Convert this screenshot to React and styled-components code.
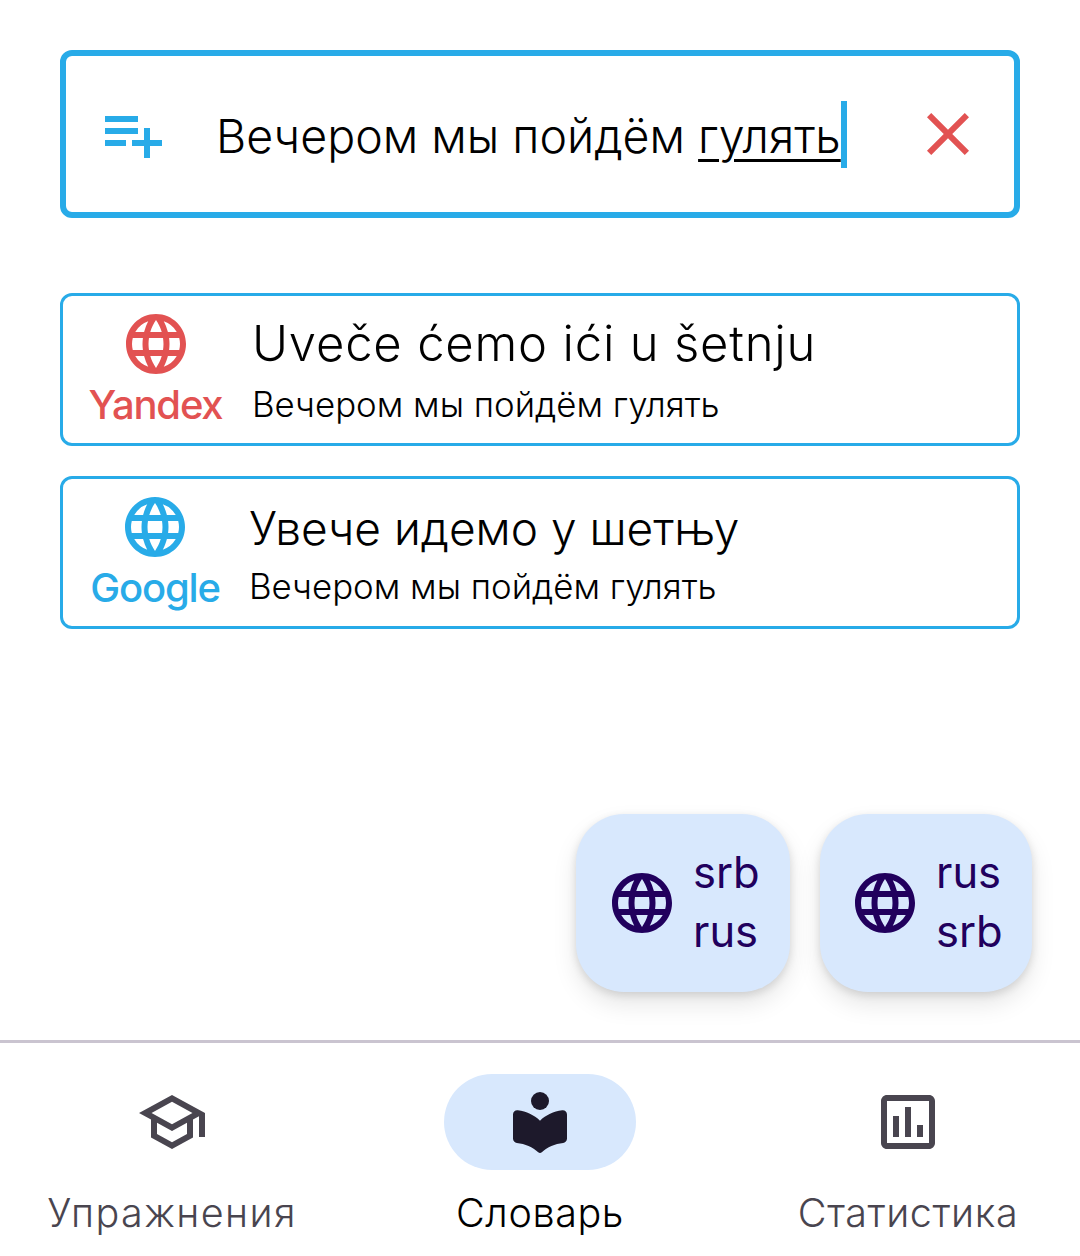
import React from 'react';
import styled, { createGlobalStyle } from 'styled-components';
import {
  MdPlaylistAdd,
  MdClose,
  MdLanguage,
  MdOutlineSchool,
  MdOutlinePoll,
} from 'react-icons/md';

const GlobalStyle = createGlobalStyle`
  html, body {
    margin: 0;
    padding: 0;
    background: #fff;
  }
`;

const Screen = styled.div`
  width: 1080px;
  height: 1256px;
  display: flex;
  flex-direction: column;
  font-family: Inter, sans-serif;
  overflow: hidden;
`;

const Content = styled.main`
  flex: 1;
  display: flex;
  flex-direction: column;
  padding: 50px 60px 0;
`;

const InputBox = styled.div`
  box-sizing: border-box;
  height: 168px;
  border: 6px solid #28abe8;
  border-radius: 12px;
  display: flex;
  align-items: center;
  padding: 0 30px 0 30px;
  color: #28abe8;
`;

const InputText = styled.div`
  flex: 1;
  margin-left: 48px;
  display: flex;
  align-items: center;
  font-size: 46.5px;
  font-weight: 350;
  line-height: 90px;
  color: #000;
  white-space: pre;
`;

const TextLine = styled.span`
  position: relative;
  top: 2px;
`;

const Composing = styled.span`
  text-decoration: underline;
  text-decoration-thickness: 3px;
  text-underline-offset: 6px;
`;

const Caret = styled.span`
  width: 6px;
  height: 67px;
  background: #28abe8;
`;

const Results = styled.div`
  margin-top: 75px;
  display: flex;
  flex-direction: column;
  gap: 30px;
`;

const Card = styled.div`
  box-sizing: border-box;
  height: 153px;
  border: 3px solid #28abe8;
  border-radius: 12px;
  display: flex;
  align-items: center;
  padding-left: ${(p) => p.$pad}px;
`;

const Source = styled.div`
  width: ${(p) => p.$width}px;
  display: flex;
  flex-direction: column;
  align-items: center;
  padding-bottom: 3px;
  color: ${(p) => p.$color};
`;

const SourceName = styled.div`
  font-size: 40px;
  font-weight: 450;
  line-height: 48px;
  letter-spacing: -1.2px;
  margin-top: 1px;
`;

const Texts = styled.div`
  margin-left: ${(p) => p.$gap}px;
  margin-bottom: 3px;
  display: flex;
  flex-direction: column;
`;

const Translation = styled.div`
  font-weight: ${(p) => (p.$latin ? 300 : 350)};
  font-size: ${(p) => (p.$latin ? 49 : 46)}px;
  letter-spacing: ${(p) => (p.$latin ? 0.8 : 0)}px;
  line-height: 68px;
  margin-top: ${(p) => (p.$latin ? 2 : 3)}px;
  color: #000;
`;

const Original = styled.div`
  font-size: 34.8px;
  font-weight: 350;
  line-height: 50px;
  margin-top: ${(p) => (p.$latin ? 1 : -1)}px;
  color: #000;
`;

const Fabs = styled.div`
  margin-top: auto;
  margin-right: -12px;
  padding-bottom: 48px;
  display: flex;
  justify-content: flex-end;
  gap: 30px;
`;

const Fab = styled.button`
  box-sizing: border-box;
  width: ${(p) => p.$width}px;
  height: 178px;
  border: 0;
  border-radius: 48px;
  background: #d8e8fd;
  box-shadow: 0 3px 9px rgba(0, 0, 0, 0.12), 0 12px 24px rgba(0, 0, 0, 0.1);
  color: #21005d;
  display: flex;
  align-items: center;
  padding: 0 0 0 ${(p) => p.$pad}px;
`;

const FabLangs = styled.div`
  margin: -2px 0 0 15px;
  font-family: Inter, sans-serif;
  font-size: 43.5px;
  font-weight: 420;
  line-height: 59px;
  text-align: left;
`;

const Nav = styled.nav`
  box-sizing: border-box;
  height: 216px;
  border-top: 3px solid #cac4d0;
  display: flex;
  padding: 31px 0 0;
`;

const NavItem = styled.div`
  width: 360px;
  display: flex;
  flex-direction: column;
  align-items: center;
  position: relative;
  left: ${(p) => p.$shift}px;
  color: ${(p) => (p.$active ? '#000' : '#49454f')};
`;

const IconPill = styled.div`
  width: 192px;
  height: 96px;
  border-radius: 48px;
  display: flex;
  align-items: center;
  justify-content: center;
  background: ${(p) => (p.$active ? '#d8e8fd' : 'transparent')};
  color: ${(p) => (p.$active ? '#1d192b' : '#49454f')};
`;

const NavLabel = styled.div`
  margin-top: 16px;
  font-size: 39.5px;
  font-weight: 350;
  letter-spacing: ${(p) => p.$track}px;
  line-height: 54px;
`;

// filled local_library with the rounded corners of the reference
const BookIcon = () => (
  <svg width="72" height="72" viewBox="0 0 24 24" fill="currentColor">
    <circle cx="12" cy="5" r="3" />
    <path d="M12 11.55C10 9.7 7.5 8.45 4.6 8.1 3.7 8 3 8.6 3 9.5v8c0 .8.6 1.4 1.3 1.5 2.7.3 5.3 1.4 7.1 3.1.35.3.85.3 1.2 0 1.8-1.7 4.4-2.8 7.1-3.1.7-.1 1.3-.7 1.3-1.5v-8c0-.9-.7-1.5-1.6-1.4-2.9.35-5.4 1.6-7.4 3.45z" />
  </svg>
);

const App = () => {
  return (
    <Screen>
      <GlobalStyle />
      <Content>
        <InputBox>
          <MdPlaylistAdd size={72} />
          <InputText>
            <TextLine>
              Вечером мы пойдём <Composing>гулять</Composing>
            </TextLine>
            <Caret />
          </InputText>
          <MdClose size={72} color="#e25252" />
        </InputBox>

        <Results>
          <Card $pad={26}>
            <Source $width={133} $color="#e25252">
              <MdLanguage size={72} />
              <SourceName>Yandex</SourceName>
            </Source>
            <Texts $gap={30}>
              <Translation $latin>Uveče ćemo ići u šetnju</Translation>
              <Original $latin>Вечером мы пойдём гулять</Original>
            </Texts>
          </Card>
          <Card $pad={27}>
            <Source $width={130} $color="#28abe8">
              <MdLanguage size={72} />
              <SourceName>Google</SourceName>
            </Source>
            <Texts $gap={29}>
              <Translation>Увече идемо у шетњу</Translation>
              <Original>Вечером мы пойдём гулять</Original>
            </Texts>
          </Card>
        </Results>

        <Fabs>
          <Fab $width={214} $pad={30}>
            <MdLanguage size={72} />
            <FabLangs>
              srb
              <br />
              rus
            </FabLangs>
          </Fab>
          <Fab $width={212} $pad={29}>
            <MdLanguage size={72} />
            <FabLangs>
              rus
              <br />
              srb
            </FabLangs>
          </Fab>
        </Fabs>
      </Content>

      <Nav>
        <NavItem $shift={-8}>
          <IconPill>
            <MdOutlineSchool size={72} />
          </IconPill>
          <NavLabel $track={1.4}>Упражнения</NavLabel>
        </NavItem>
        <NavItem $active $shift={0}>
          <IconPill $active>
            <BookIcon />
          </IconPill>
          <NavLabel $track={0.6}>Словарь</NavLabel>
        </NavItem>
        <NavItem $shift={8}>
          <IconPill>
            <MdOutlinePoll size={72} />
          </IconPill>
          <NavLabel $track={0.6}>Статистика</NavLabel>
        </NavItem>
      </Nav>
    </Screen>
  );
};

export default App;
